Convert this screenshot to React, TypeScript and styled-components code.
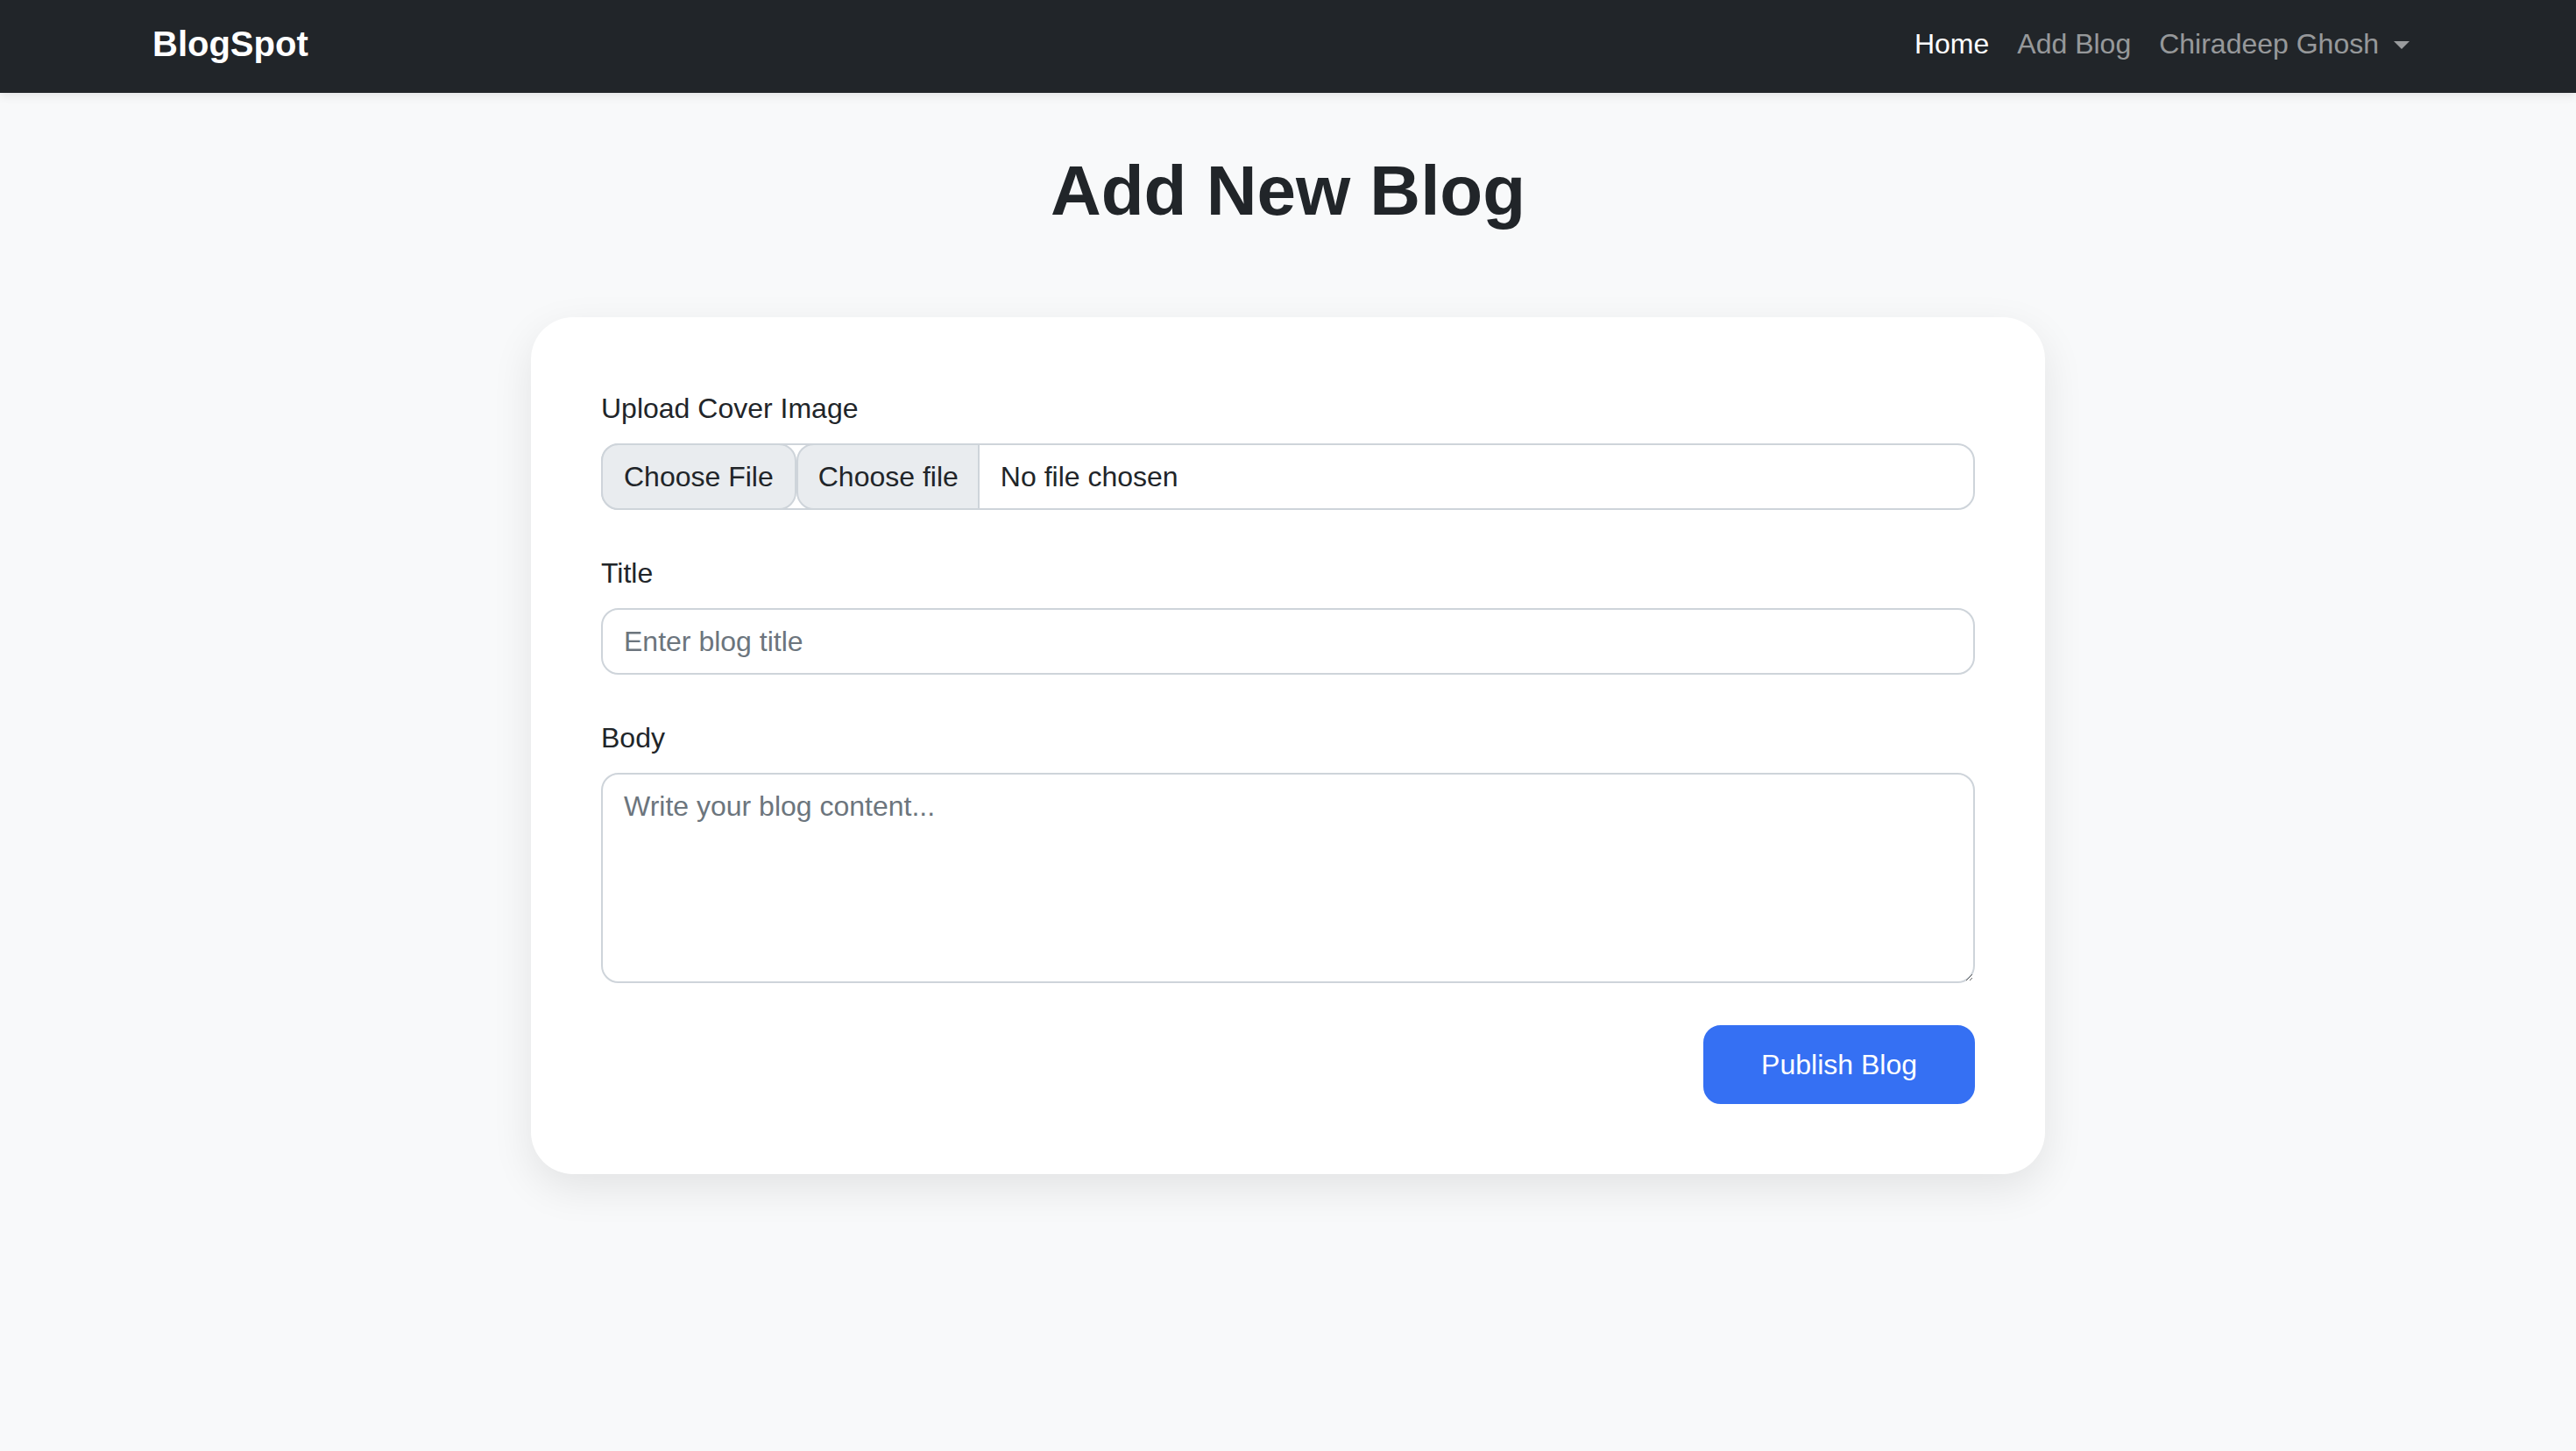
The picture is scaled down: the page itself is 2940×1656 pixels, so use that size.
import styled, { createGlobalStyle } from "styled-components";

const GlobalStyle = createGlobalStyle`
  html, body {
    margin: 0;
    padding: 0;
  }

  body {
    min-height: 100vh;
    background: #f8f9fa;
    color: #212529;
    font-family: "Liberation Sans", Arial, sans-serif;
  }

  * {
    box-sizing: border-box;
  }
`;

export default function App() {
  return (
    <>
      <GlobalStyle />
      <Navbar>
        <Brand>BlogSpot</Brand>
        <NavList>
          <NavLink $active>Home</NavLink>
          <NavLink>Add Blog</NavLink>
          <NavLink>
            Chiradeep Ghosh
            <Caret />
          </NavLink>
        </NavList>
      </Navbar>

      <Main>
        <Heading>Add New Blog</Heading>
        <Card>
          <Field>
            <Label>Upload Cover Image</Label>
            <FileBox>
              <NativeButton>Choose File</NativeButton>
              <SelectorButton>Choose file</SelectorButton>
              <FileName>No file chosen</FileName>
            </FileBox>
          </Field>

          <Field>
            <Label htmlFor="title">Title</Label>
            <TextInput id="title" type="text" placeholder="Enter blog title" />
          </Field>

          <Field>
            <Label htmlFor="body">Body</Label>
            <TextArea id="body" placeholder="Write your blog content..." />
          </Field>

          <Actions>
            <PublishButton type="button">Publish Blog</PublishButton>
          </Actions>
        </Card>
      </Main>
    </>
  );
}

const Navbar = styled.nav`
  height: 106px;
  padding: 0 174px 6px;
  display: flex;
  align-items: center;
  justify-content: space-between;
  background: #212529;
  box-shadow: 0 4px 10px rgba(0, 0, 0, 0.08);
`;

const Brand = styled.a`
  font-size: 40px;
  line-height: 60px;
  font-weight: 700;
  color: #ffffff;
  cursor: pointer;
`;

const NavList = styled.div`
  display: flex;
  align-items: center;
`;

const NavLink = styled.a<{ $active?: boolean }>`
  display: flex;
  align-items: center;
  padding: 0 16px;
  font-size: 32px;
  line-height: 48px;
  color: ${({ $active }) => ($active ? "#ffffff" : "rgba(255, 255, 255, 0.55)")};
  cursor: pointer;
`;

const Caret = styled.span`
  display: inline-block;
  margin-left: 17px;
  margin-top: 2px;
  width: 0;
  height: 0;
  border-top: 9px solid rgba(255, 255, 255, 0.55);
  border-left: 9px solid transparent;
  border-right: 9px solid transparent;
`;

const Main = styled.main`
  padding: 64px 0 120px;
`;

const Heading = styled.h1`
  margin: 0 0 96px;
  text-align: center;
  font-size: 80px;
  line-height: 96px;
  font-weight: 700;
  color: #212529;
`;

const Card = styled.section`
  width: 1728px;
  margin: 0 auto;
  padding: 80px;
  background: #ffffff;
  border-radius: 48px;
  box-shadow: 0 16px 48px rgba(0, 0, 0, 0.09);
`;

const Field = styled.div`
  margin-bottom: 48px;
`;

const Label = styled.label`
  display: block;
  margin-bottom: 16px;
  font-size: 32px;
  line-height: 48px;
  color: #212529;
`;

const FileBox = styled.div`
  display: flex;
  align-items: stretch;
  height: 76px;
  border: 2px solid #ced4da;
  border-radius: 20px;
  background: #ffffff;
  font-size: 32px;
  color: #212529;
`;

const NativeButton = styled.span`
  display: flex;
  align-items: center;
  margin: -2px 0 -2px -2px;
  padding: 0 24px;
  background: #e9ecef;
  border: 2px solid #ced4da;
  border-radius: 20px;
`;

const SelectorButton = styled.span`
  display: flex;
  align-items: center;
  margin: -2px 0;
  padding: 0 22px 0 23px;
  background: #e9ecef;
  border: 2px solid #ced4da;
  border-radius: 20px 0 0 20px;
`;

const FileName = styled.span`
  display: flex;
  align-items: center;
  padding-left: 24px;
`;

const TextInput = styled.input`
  display: block;
  width: 100%;
  height: 76px;
  padding: 12px 24px;
  border: 2px solid #ced4da;
  border-radius: 20px;
  font-family: inherit;
  font-size: 32px;
  line-height: 48px;
  color: #212529;
  background: #ffffff;
  outline: none;

  &::placeholder {
    color: #6c757d;
  }
`;

const TextArea = styled.textarea`
  display: block;
  width: 100%;
  height: 240px;
  padding: 12px 24px;
  border: 2px solid #ced4da;
  border-radius: 20px;
  font-family: inherit;
  font-size: 32px;
  line-height: 48px;
  color: #212529;
  background: #ffffff;
  resize: vertical;
  outline: none;

  &::placeholder {
    color: #6c757d;
  }
`;

const Actions = styled.div`
  display: flex;
  justify-content: flex-end;
`;

const PublishButton = styled.button`
  padding: 19px 64px;
  border: 2px solid #3570f3;
  border-radius: 20px;
  background: #3570f3;
  color: #ffffff;
  font-family: inherit;
  font-size: 32px;
  line-height: 48px;
  cursor: pointer;
`;
